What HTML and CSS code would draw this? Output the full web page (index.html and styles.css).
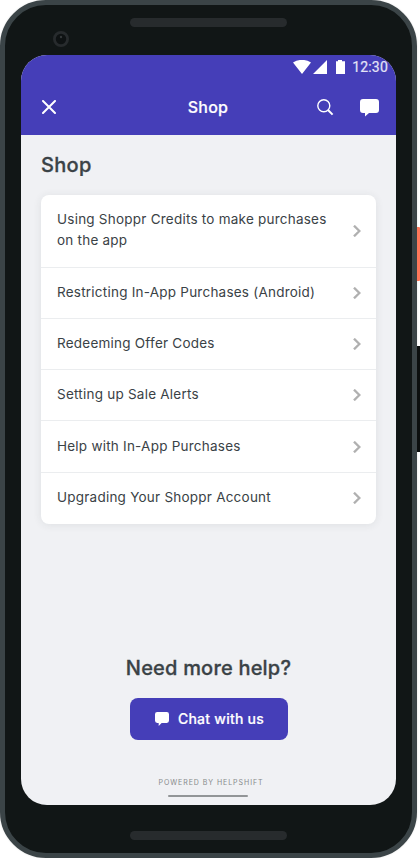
FILE: index.html
```html
<!DOCTYPE html>
<html lang="en">
<head>
<meta charset="utf-8">
<title>Shop</title>
<link rel="stylesheet" href="styles.css">
</head>
<body>
<div class="phone">
  <span class="key power"></span>
  <span class="key volume"></span>
  <svg class="camera" width="18" height="18" viewBox="0 0 18 18"><circle cx="9" cy="9" r="6.6" fill="#0e1213" stroke="#272b2d" stroke-width="2.8"/><circle cx="9" cy="7" r="1.2" fill="#34383a"/></svg>
  <div class="bezel"><span class="speaker"></span></div>
  <main class="screen">
    <header class="top">
      <div class="status">
        <svg width="52" height="14" viewBox="0 0 52 14" fill="#fff"><path d="M0 2.5Q9-2.8 18 2.5L9 14ZM34 0v14H20ZM45 0h4v1.3h3V14h-9V1.3h2Z"/></svg>
        <span class="time">12:30</span>
      </div>
      <div class="bar">
        <svg class="close" width="14" height="14" viewBox="0 0 14 14" fill="none" stroke="#fff" stroke-width="2" stroke-linecap="round"><path d="M1 1l12 12M13 1 1 13"/></svg>
        <span class="bar-title">Shop</span>
        <svg class="search" width="17" height="17" viewBox="0 0 17 17" fill="none" stroke="#fff"><circle cx="6.8" cy="6.8" r="6" stroke-width="1.4"/><path d="m11 11 4.6 4.6" stroke-width="2"/></svg>
        <svg class="bubble" width="19" height="18" viewBox="0 0 19 18" fill="#fff"><path d="M3 0h13a3 3 0 0 1 3 3v8a3 3 0 0 1-3 3H9l-4 3.5V14H3a3 3 0 0 1-3-3V3a3 3 0 0 1 3-3Z"/></svg>
      </div>
    </header>
    <h1>Shop</h1>
    <ul class="card">
      <li class="tall"><span>Using Shoppr Credits to make purchases<br>on the app</span><svg width="8" height="12" viewBox="0 0 8 12"><path d="m1 .7 5.4 5.3L1 11.3"/></svg></li>
      <li><span>Restricting In-App Purchases (Android)</span><svg width="8" height="12" viewBox="0 0 8 12"><path d="m1 .7 5.4 5.3L1 11.3"/></svg></li>
      <li><span>Redeeming Offer Codes</span><svg width="8" height="12" viewBox="0 0 8 12"><path d="m1 .7 5.4 5.3L1 11.3"/></svg></li>
      <li><span>Setting up Sale Alerts</span><svg width="8" height="12" viewBox="0 0 8 12"><path d="m1 .7 5.4 5.3L1 11.3"/></svg></li>
      <li><span>Help with In-App Purchases</span><svg width="8" height="12" viewBox="0 0 8 12"><path d="m1 .7 5.4 5.3L1 11.3"/></svg></li>
      <li><span>Upgrading Your Shoppr Account</span><svg width="8" height="12" viewBox="0 0 8 12"><path d="m1 .7 5.4 5.3L1 11.3"/></svg></li>
    </ul>
    <section class="help">
      <h2>Need more help?</h2>
      <button class="chat"><svg width="14" height="14" viewBox="0 0 19 18" preserveAspectRatio="none" fill="#fff"><path d="M3 0h13a3 3 0 0 1 3 3v8a3 3 0 0 1-3 3H9l-4 4v-4H3a3 3 0 0 1-3-3V3a3 3 0 0 1 3-3Z"/></svg><span>Chat with us</span></button>
      <p class="powered">POWERED BY HELPSHIFT</p>
      <div class="home"></div>
    </section>
  </main>
  <div class="bezel"><span class="speaker"></span></div>
</div>
</body>
</html>
```

FILE: styles.css
```css
* { box-sizing: border-box; }
body { margin: 0; background: #fff; font-family: Inter, "Liberation Sans", sans-serif; color: #3a4246; overflow: hidden; }
.phone { position: relative; width: 417px; height: 858px; border: 5px solid #3b4447; border-radius: 46px; background: #111616; box-shadow: 0 0 2px rgba(0,0,0,.15); }
.key { position: absolute; left: 412px; width: 3px; }
.power { top: 222px; height: 54px; background: #ff775a; border-radius: 0 1px 1px 0; }
.volume { top: 341px; height: 106px; background: #0c0f0f; }
.camera { position: absolute; left: 47px; top: 25px; }
.bezel { height: 50px; display: flex; justify-content: center; padding-top: 13px; }
.screen + .bezel { height: 48px; padding-top: 26px; }
.speaker { width: 157px; height: 9px; border-radius: 5px; background: #272b2d; }
.screen { width: 375px; height: 750px; margin-left: 16px; border-radius: 26px; background: #f0f1f4; overflow: hidden; display: flex; flex-direction: column; }
.top { height: 80px; flex: none; background: #453eb8; color: #fff; }
.status { height: 24px; display: flex; justify-content: flex-end; align-items: center; padding-right: 8px; gap: 7px; }
.time { font: 14px/24px Roboto, sans-serif; letter-spacing: .2px; color: #e4e3f6; -webkit-text-stroke: .2px; }
.bar { height: 56px; display: flex; align-items: center; padding: 0 17px 0 21px; }
.close { flex: none; }
.bar-title { width: 60px; margin-left: 122px; text-align: center; font-size: 16px; font-weight: 500; letter-spacing: .2px; -webkit-text-stroke: .2px; }
.search { margin-left: 79px; }
.bubble { margin-left: 26px; margin-top: 2px; }
h1 { margin: 18px 20px 0; font-size: 20px; line-height: 24px; font-weight: 500; letter-spacing: .3px; -webkit-text-stroke: .3px; }
.card { margin: 18px 20px 0; padding: 0; list-style: none; height: 329px; background: #fff; border-radius: 8px; box-shadow: 0 1px 8px rgba(40,50,60,.09); }
.card li { height: 51.3px; display: flex; align-items: center; justify-content: space-between; padding: 0 15px 0 16px; border-bottom: 1px solid #ebedef; font-size: 13.5px; line-height: 21px; letter-spacing: .23px; }
.card li.tall { height: 72.5px; }
.card li:last-child { border-bottom: 0; }
.card li:nth-child(4) span { padding-bottom: 2px; }
.card .tall span, .card li:last-child span { padding-bottom: 1px; }
.card svg { flex: none; fill: none; stroke: #b0b0b0; stroke-width: 2.4; }
.help { margin-top: 131px; display: flex; flex-direction: column; align-items: center; }
h2 { margin: 0; font-size: 20px; line-height: 26px; font-weight: 500; letter-spacing: .2px; -webkit-text-stroke: .3px; }
.chat { margin-top: 17px; width: 158px; height: 42px; border: 0; border-radius: 8px; background: #453eb8; color: #fff; display: flex; align-items: center; justify-content: center; gap: 9px; padding: 0 0 0 2px; font: 500 14px Inter, sans-serif; letter-spacing: .25px; -webkit-text-stroke: .2px; }
.chat span { padding-bottom: 1px; }
.powered { margin: 38px 0 0 5px; font-size: 7px; line-height: 10px; letter-spacing: .95px; color: #86898b; }
.home { margin: 7px 2px 0 0; width: 80px; height: 2px; border-radius: 1px; background: #929597; }
```
